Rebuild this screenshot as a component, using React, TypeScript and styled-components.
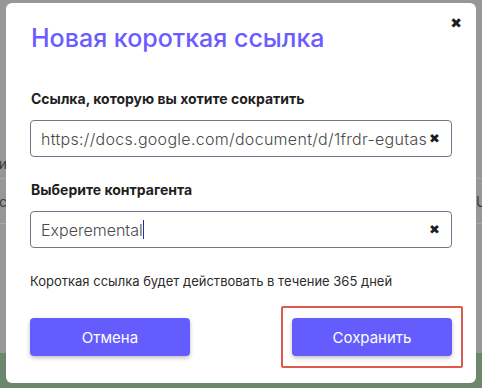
import React from 'react'
import styled, { createGlobalStyle } from 'styled-components'

const GlobalStyle = createGlobalStyle`
  html, body {
    margin: 0;
    padding: 0;
    width: 482px;
    height: 388px;
    overflow: hidden;
  }
  body {
    font-family: 'Inter', 'Liberation Sans', sans-serif;
  }
`

const App = () => (
  <Page>
    <GlobalStyle />
    <Backdrop>
      <Table>
        <Row $height={30}>
          <EdgeCell>Ссылки</EdgeCell>
          <EdgeCell $right />
        </Row>
        <Row $height={44}>
          <EdgeCell>Lc</EdgeCell>
          <EdgeCell $right>Ug</EdgeCell>
        </Row>
      </Table>
      <Footer />
    </Backdrop>

    <Modal>
      <CloseButton aria-label="Закрыть">✖</CloseButton>
      <Title>Новая короткая ссылка</Title>

      <Field>
        <Label>Ссылка, которую вы хотите сократить</Label>
        <InputBox>
          <InputText>https://docs.google.com/document/d/1frdr-egutas</InputText>
          <ClearIcon>✖</ClearIcon>
        </InputBox>
      </Field>

      <Field>
        <Label>Выберите контрагента</Label>
        <InputBox>
          <InputText $tight>
            Experemental<Caret />
          </InputText>
          <ClearIcon>✖</ClearIcon>
        </InputBox>
      </Field>

      <Note>Короткая ссылка будет действовать в течение 365 дней</Note>

      <Actions>
        <Button>Отмена</Button>
        <Highlight>
          <Button>Сохранить</Button>
        </Highlight>
      </Actions>
    </Modal>
  </Page>
)

export default App

// Styles
const Page = styled.div`
  position: relative;
  width: 482px;
  height: 388px;
  overflow: hidden;
  background: #979797;
`

const Backdrop = styled.div`
  height: 100%;
  display: flex;
  flex-direction: column;
  justify-content: space-between;
`

const Table = styled.div`
  padding-top: 148px;
`

const Row = styled.div<{ $height: number }>`
  height: ${p => p.$height}px;
  display: flex;
  align-items: center;
  justify-content: space-between;
  border-bottom: 1px solid #a8a8a8;
  font-size: 14px;
  color: #3b3b3b;
`

const EdgeCell = styled.div<{ $right?: boolean }>`
  width: ${p => (p.$right ? 6 : 7)}px;
  overflow: hidden;
  display: flex;
  justify-content: ${p => (p.$right ? 'flex-start' : 'flex-end')};
  white-space: nowrap;
`

const Footer = styled.div`
  height: 35px;
  background: #6c876c;
`

const Modal = styled.div`
  position: absolute;
  left: 6px;
  top: 3px;
  width: 470px;
  height: 380px;
  box-sizing: border-box;
  padding: 20px 24px 0 24px;
  background: #ffffff;
  border-radius: 6px;
  display: flex;
  flex-direction: column;
`

const CloseButton = styled.button`
  position: absolute;
  top: 10px;
  right: 14px;
  padding: 0;
  border: none;
  background: none;
  font-family: 'DejaVu Sans', sans-serif;
  font-size: 14px;
  line-height: 20px;
  color: #1e1e1e;
  cursor: pointer;
`

const Title = styled.h2`
  margin: 0 0 37px 1px;
  font-size: 25px;
  line-height: 30px;
  font-weight: 500;
  color: #6a5cff;
`

const Field = styled.div`
  display: flex;
  flex-direction: column;
  gap: 12px;
  margin-bottom: 24px;
`

const Label = styled.div`
  margin-left: 1px;
  font-size: 14px;
  line-height: 18px;
  font-weight: 700;
  color: #1f1f1f;
`

const InputBox = styled.div`
  height: 37px;
  box-sizing: border-box;
  border: 1px solid #74748a;
  border-radius: 4px;
  padding: 0 11px 0 10px;
  display: flex;
  align-items: center;
  justify-content: space-between;
`

const InputText = styled.div<{ $tight?: boolean }>`
  font-size: 16px;
  font-weight: 300;
  letter-spacing: ${p => (p.$tight ? 0 : 0.3)}px;
  color: #4a4a4a;
  white-space: nowrap;
  display: flex;
  align-items: center;
`

const Caret = styled.span`
  display: inline-block;
  width: 1px;
  height: 19px;
  background: #2a2ab0;
`

const ClearIcon = styled.span`
  font-family: 'DejaVu Sans', sans-serif;
  font-size: 13px;
  color: #1e1e1e;
`

const Note = styled.div`
  font-size: 13px;
  line-height: 18px;
  color: #2b2b2b;
`

const Actions = styled.div`
  margin-top: 16px;
  display: flex;
  align-items: center;
  justify-content: space-between;
`

const Button = styled.button`
  width: 160px;
  height: 38px;
  border: none;
  border-radius: 4px;
  background: #655cfe;
  box-shadow: 0 2px 4px rgba(0, 0, 0, 0.25);
  color: #ffffff;
  font-family: inherit;
  font-size: 15px;
  font-weight: 400;
  cursor: pointer;
`

const Highlight = styled.div`
  margin-right: -11px;
  padding: 10px 9px;
  border: 2px solid #dc5a4e;
  border-radius: 2px;
  display: flex;
`
